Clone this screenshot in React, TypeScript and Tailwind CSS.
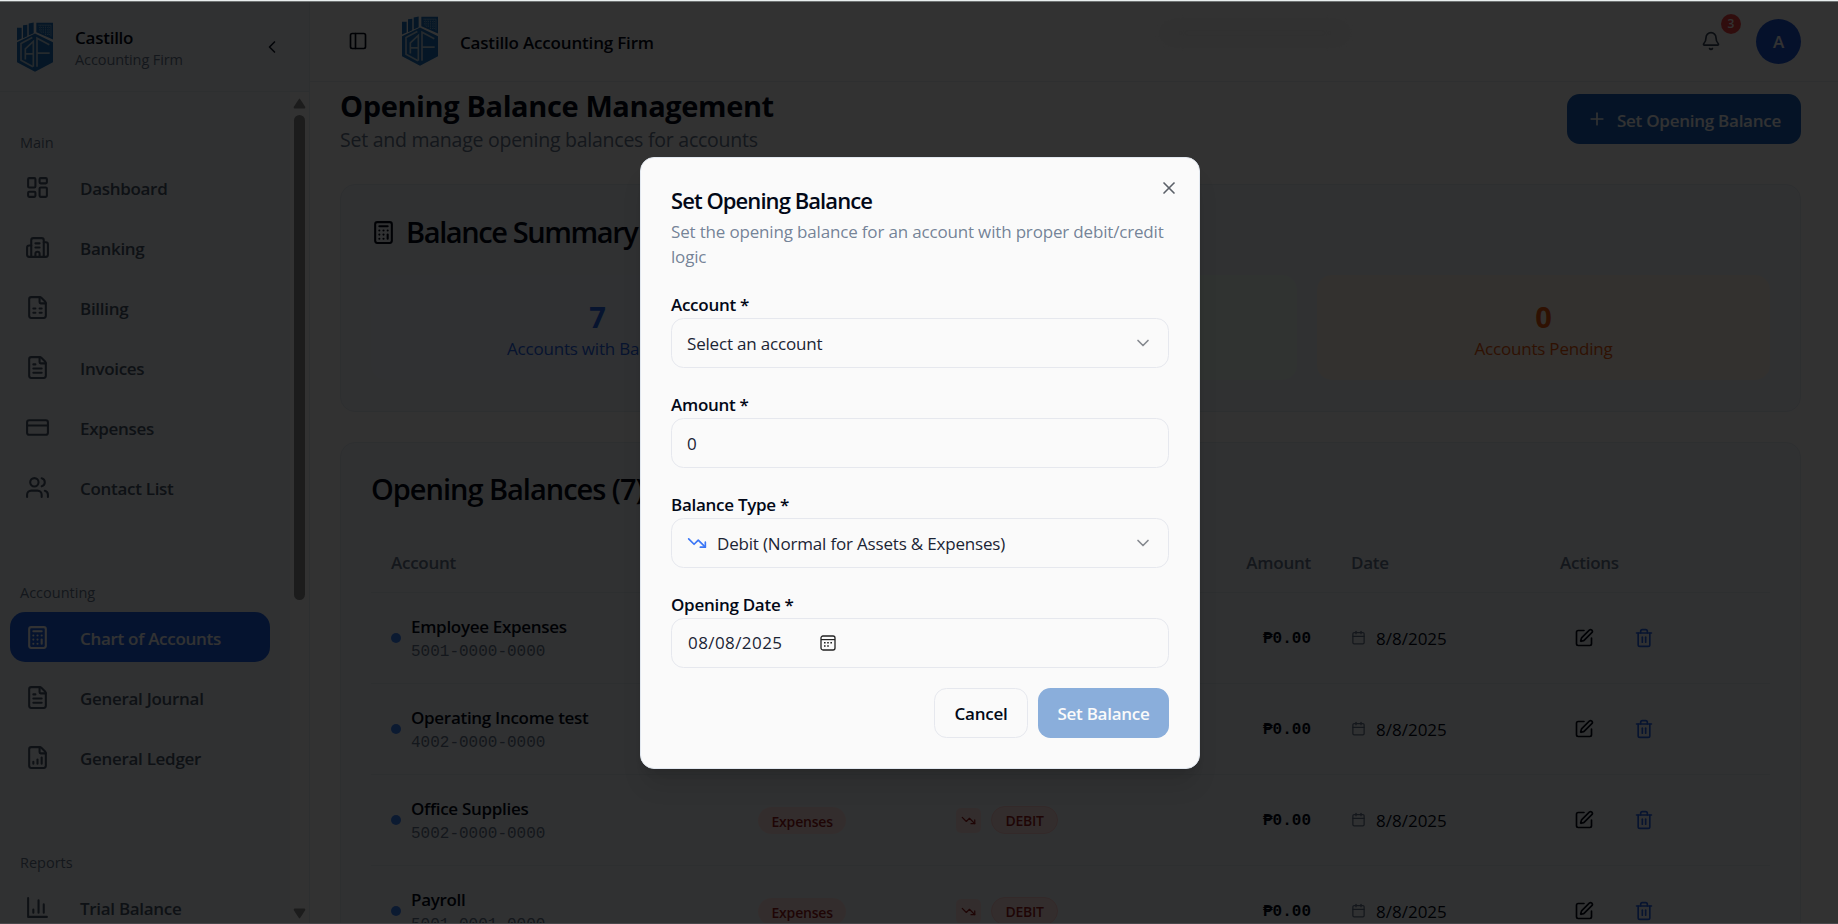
import type { ReactNode } from "react";
import {
  Bell,
  Building2,
  Calculator,
  Calendar,
  ChevronDown,
  ChevronLeft,
  CreditCard,
  FileChartColumnIncreasing,
  FileSpreadsheet,
  FileText,
  LayoutDashboard,
  PanelLeft,
  Plus,
  SquarePen,
  Trash2,
  TrendingDown,
  Users,
  X,
} from "lucide-react";

function Logo() {
  return (
    <svg width="36" height="50" viewBox="0 0 108 149" fill="none" className="shrink-0">
      <g fill="#1a70bd">
        <path d="M0 17h14v32L0 55z" />
        <path d="M18 9l13-1v34l-13 6z" />
        <path d="M35 4l15-3v32l-15 7z" />
        <path d="M58 2h50v50L58 30z" />
        <path d="M0 60L54 34l54 26v60l-54 29L0 120z" />
      </g>
      <g stroke="#9fc0dc" strokeWidth="2">
        <path d="M64 9h38v34" />
        <path d="M66 16h34M66 23h34M72 30h28M84 37h16M70 10v20M78 10v24M86 10v28M94 10v30" strokeDasharray="3 3" />
      </g>
      <g stroke="#b9cfe0" strokeWidth="5">
        <path d="M46 46L12 64v50l36 20" />
        <path d="M25 112V80L49 58v76M25 95h24" />
        <path d="M97 68L60 48v86M60 93h38" />
      </g>
    </svg>
  );
}

function ChartIcon() {
  return (
    <svg width="25" height="25" viewBox="0 0 24 24" fill="none" stroke="currentColor" strokeWidth="2" strokeLinecap="round" strokeLinejoin="round">
      <path d="M3 3v18h18M18 17V9M13 17V5M8 17v-3" />
    </svg>
  );
}

function DatePickerIcon() {
  return (
    <svg width="16" height="16" viewBox="0 0 16 16" fill="none" className="ml-[38px]">
      <rect x="1" y="1" width="14" height="14" rx="2" stroke="#222" strokeWidth="1.3" />
      <path d="M1 4.6h14" stroke="#222" strokeWidth="1.2" />
      <path d="M4 7.8h1.6M7.2 7.8h1.6M10.4 7.8h1.6M4 11h1.6M7.2 11h1.6" stroke="#222" strokeWidth="1.6" />
    </svg>
  );
}

type NavEntry = { label: string; icon: ReactNode; active?: boolean };
type NavGroup = { title: string; items: NavEntry[] };

const groups: NavGroup[] = [
  {
    title: "Main",
    items: [
      { label: "Dashboard", icon: <LayoutDashboard size={25} /> },
      { label: "Banking", icon: <Building2 size={25} /> },
      { label: "Billing", icon: <FileSpreadsheet size={25} /> },
      { label: "Invoices", icon: <FileText size={25} /> },
      { label: "Expenses", icon: <CreditCard size={25} /> },
      { label: "Contact List", icon: <Users size={25} /> },
    ],
  },
  {
    title: "Accounting",
    items: [
      { label: "Chart of Accounts", icon: <Calculator size={25} />, active: true },
      { label: "General Journal", icon: <FileText size={25} /> },
      { label: "General Ledger", icon: <FileChartColumnIncreasing size={25} /> },
    ],
  },
  { title: "Reports", items: [{ label: "Trial Balance", icon: <ChartIcon /> }] },
];

const rows = [
  { name: "Employee Expenses", code: "5001-0000-0000", type: "Expenses" },
  { name: "Operating Income test", code: "4002-0000-0000", type: "Revenue" },
  { name: "Office Supplies", code: "5002-0000-0000", type: "Expenses" },
  { name: "Payroll", code: "5001-0001-0000", type: "Expenses" },
];

function Sidebar() {
  return (
    <aside className="flex w-[310px] shrink-0 flex-col border-r border-[#e2e8f0] bg-[#f1f5f9]">
      <div className="flex h-[92px] shrink-0 items-center border-b border-[#e2e8f0] pt-[2px] pl-[17px]">
        <Logo />
        <div className="ml-[22px] flex w-[187px] flex-col pt-1">
          <span className="text-[17px] leading-[22px] font-semibold tracking-[-0.25px] text-[#020817]">Castillo</span>
          <span className="text-[14.5px] leading-[22px] tracking-[-0.1px] text-[#64748b]">Accounting Firm</span>
        </div>
        <ChevronLeft size={20} className="text-[#0f172a]" />
      </div>
      <div className="flex min-h-0 flex-1">
        <nav className="flex w-[290px] flex-col gap-[60px] overflow-hidden pt-[30px] pl-[10px]">
          {groups.map((g) => (
            <div key={g.title} className="flex w-[260px] shrink-0 flex-col">
              <div className="flex h-10 items-center pt-0.5 pl-[10px] text-[14.5px] font-medium text-[#64748b]">{g.title}</div>
              <div className="flex flex-col gap-[10px]">
                {g.items.map((it) => (
                  <div
                    key={it.label}
                    className={
                      it.active
                        ? "flex h-[50px] items-center rounded-[15px] bg-[#1d62e8] pl-[15px] text-[#f8fafc]"
                        : "flex h-[50px] items-center rounded-[15px] pl-[15px] text-[#475569]"
                    }
                  >
                    {it.icon}
                    <span className="pt-1 pl-[30px] text-[17px] leading-[22px] font-semibold tracking-[-0.3px]">{it.label}</span>
                  </div>
                ))}
              </div>
            </div>
          ))}
        </nav>
        <div className="flex flex-1 flex-col items-center bg-[#fafafa] py-[5px]">
          <svg width="13" height="11" viewBox="0 0 13 11" className="mt-px shrink-0 fill-[#8b8b8b]">
            <path d="M6.5 0.5Q7 0.5 12.3 9Q12.5 10.5 11.5 10.5H1.5Q0.5 10.5 0.7 9Q6 0.5 6.5 0.5z" />
          </svg>
          <div className="mt-[6px] h-[485px] w-[11px] rounded-full bg-[#8b8b8b]" />
          <svg width="13" height="11" viewBox="0 0 13 11" className="mt-auto shrink-0 rotate-180 fill-[#8b8b8b]">
            <path d="M6.5 0.5Q7 0.5 12.3 9Q12.5 10.5 11.5 10.5H1.5Q0.5 10.5 0.7 9Q6 0.5 6.5 0.5z" />
          </svg>
        </div>
      </div>
    </aside>
  );
}

function Header() {
  return (
    <header className="flex h-[82px] shrink-0 items-center border-b border-[#e4e8ee] pt-px pr-[37px] pl-[38px]">
      <PanelLeft size={20} className="text-[#020817]" />
      <div className="ml-[34px]">
        <Logo />
      </div>
      <span className="ml-[22px] pt-1 text-[17px] font-semibold tracking-[-0.18px] text-[#020817]">Castillo Accounting Firm</span>
      <div className="ml-[506px] mb-4 h-4 w-[190px] rounded-full bg-[#ebebeb] blur-[10px]" />
      <div className="relative ml-auto mr-[35px]">
        <Bell size={20} className="text-[#334155]" />
        <span className="absolute -top-[17px] left-[20px] flex size-5 items-center justify-center rounded-full bg-[#ef4444] text-[12px] font-semibold text-[#fafafa]">3</span>
      </div>
      <div className="flex size-[45px] items-center justify-center rounded-full bg-[#1d56d8] pt-0.5 text-[17px] font-semibold text-[#fafafa]">A</div>
    </header>
  );
}

function Stat({ value, label, tone }: { value: string; label: string; tone: string }) {
  return (
    <div className={`flex h-[105px] flex-col items-center rounded-[15px] pt-[20px] ${tone}`}>
      <span className="text-[29px] leading-[43px] font-bold">{value}</span>
      <span className="text-[17px] leading-[22px] tracking-[-0.2px]">{label}</span>
    </div>
  );
}

function Summary() {
  return (
    <section className="mt-10 h-[228px] rounded-[15px] border border-[#e2e8f0] bg-[#eff4fa] px-[30px] pt-[24px]">
      <h2 className="flex h-[46px] items-center text-[29px] font-semibold tracking-[-1.4px] text-[#020817]">
        <Calculator size={25} className="mr-[10px]" />
        Balance Summary
      </h2>
      <div className="mt-[20px] grid grid-cols-3 gap-[20px]">
        <Stat value="7" label="Accounts with Balances" tone="bg-[#eff4fc] text-[#2563eb]" />
        <Stat value="₱0.00" label="Total Balance" tone="bg-[#f0fdf4] text-[#16a34a]" />
        <Stat value="0" label="Accounts Pending" tone="bg-[#fdf4ea] text-[#ea580c]" />
      </div>
    </section>
  );
}

const columns = "grid grid-cols-[367px_198px_230px_165px_209px_1fr] border-b border-[#e2e8f0]";

function Balances() {
  return (
    <section className="mt-[30px] h-[600px] rounded-[15px] border border-[#e2e8f0] bg-[#f1f5f9] px-[30px] pt-[25px]">
      <h2 className="h-[42px] text-[29px] leading-[42px] font-semibold tracking-[-1.02px] text-[#020817]">Opening Balances (7)</h2>
      <div className={`${columns} mt-[23px] h-[60px] items-center text-[17px] font-semibold tracking-[-0.25px] text-[#64748b]`}>
        <span className="px-5">Account</span>
        <span className="px-5">Type</span>
        <span className="px-5">Balance Type</span>
        <span className="px-5 text-right">Amount</span>
        <span className="px-5">Date</span>
        <span className="px-5">Actions</span>
      </div>
      {rows.map((r) => (
        <div key={r.name} className={`${columns} h-[91px] items-center`}>
          <div className="flex items-center px-5">
            <span className="size-[10px] rounded-full bg-[#3b82f6]" />
            <div className="ml-[10px] flex flex-col">
              <span className="text-[17px] leading-[24px] font-semibold tracking-[-0.3px] text-[#020817]">{r.name}</span>
              <span className="pt-[3px] font-['Liberation_Mono',monospace] text-[16px] leading-[20px] text-[#64748b]">{r.code}</span>
            </div>
          </div>
          <div className="flex px-5">
            <span className="flex h-[27px] items-center rounded-full bg-[#fee2e2] px-[13.5px] pt-0.5 text-[14px] font-semibold tracking-[-0.2px] text-[#991b1b]">{r.type}</span>
          </div>
          <div className="flex items-center gap-[10px] px-5">
            <span className="flex size-[25px] items-center justify-center rounded-[5px] bg-[#fee2e2]">
              <TrendingDown size={15} className="text-[#991b1b]" />
            </span>
            <span className="flex h-[28px] items-center rounded-full border border-[#fecaca] bg-[#fee2e2] px-[13.5px] text-[14px] font-semibold tracking-[-0.3px] text-[#991b1b]">DEBIT</span>
          </div>
          <span className="px-5 pt-px text-right font-['Liberation_Mono',monospace] text-[16px] font-bold text-[#020817]">₱0.00</span>
          <div className="flex items-center px-5">
            <Calendar size={15} className="mb-px text-[#64748b]" />
            <span className="pt-0.5 pl-[10px] text-[17px] text-[#020817]">8/8/2025</span>
          </div>
          <div className="flex gap-[10px] pl-[19px]">
            <span className="flex w-[50px] justify-center text-[#020817]">
              <SquarePen size={20} />
            </span>
            <span className="flex w-[50px] justify-center text-[#2563eb]">
              <Trash2 size={20} />
            </span>
          </div>
        </div>
      ))}
    </section>
  );
}

function Field({ label, children }: { label: string; children: ReactNode }) {
  return (
    <div className="flex h-[75px] flex-col">
      <span className="h-[25px] text-[17px] leading-[24px] font-semibold tracking-[-0.28px] text-[#020817]">{label}</span>
      <div className="flex h-[50px] items-center rounded-[12.5px] border border-[#e6e8ee] px-[15px] text-[17px] tracking-[-0.18px] text-[#1b2434]">{children}</div>
    </div>
  );
}

function Dialog() {
  return (
    <div className="relative flex h-[612px] w-[560px] flex-col rounded-[14px] border border-[#e2e8f0] bg-[#fafafa] px-[30px] pt-[28px] shadow-xl">
      <X size={20} className="absolute top-[20px] right-[20px] text-[#5b6068]" />
      <h3 className="h-[29px] text-[22px] leading-[29px] font-semibold tracking-[-0.93px] text-[#020817]">Set Opening Balance</h3>
      <p className="mt-[4px] text-[17px] leading-[25px] tracking-[-0.17px] text-[#64748b]/90">
        Set the opening balance for an account with proper debit/credit logic
      </p>
      <div className="mt-[24px] flex flex-col gap-[25px]">
        <Field label="Account *">
          <span className="pt-0.5">Select an account</span>
          <ChevronDown size={20} className="ml-auto text-[#85898f]" />
        </Field>
        <Field label="Amount *">
          <span className="pt-0.5">0</span>
        </Field>
        <Field label="Balance Type *">
          <TrendingDown size={20} className="text-[#3b76f6]" />
          <span className="pt-0.5 pl-[10px]">Debit (Normal for Assets &amp; Expenses)</span>
          <ChevronDown size={20} className="ml-auto text-[#85898f]" />
        </Field>
        <Field label="Opening Date *">
          <span className="pl-px tracking-[0.42px]">08/08/2025</span>
          <DatePickerIcon />
        </Field>
      </div>
      <div className="mt-[20px] flex justify-end gap-[10px]">
        <button className="h-[50px] w-[94px] rounded-[12.5px] border border-[#e6e8ee] pt-0.5 text-[17px] font-semibold tracking-[-0.25px] text-[#020817]">Cancel</button>
        <button className="h-[50px] w-[131px] rounded-[12.5px] bg-[#8aaedb] pt-0.5 text-[17px] font-semibold tracking-[-0.25px] text-[#fafafa]">Set Balance</button>
      </div>
    </div>
  );
}

export default function App() {
  return (
    <div className="relative h-[924px] w-full overflow-hidden bg-[#fafafa] font-['Open_Sans',sans-serif]">
      <div className="flex h-full">
        <Sidebar />
        <div className="flex min-w-0 flex-1 flex-col">
          <Header />
          <main className="min-h-0 flex-1 overflow-hidden pr-[37px] pl-[30px]">
            <div className="flex justify-between pt-[5px]">
              <div className="flex h-[57px] flex-col">
                <h1 className="text-[29px] leading-[38px] font-bold tracking-[-0.38px] text-[#020817]">Opening Balance Management</h1>
                <p className="pt-px text-[19.5px] leading-[28px] tracking-[-0.25px] text-[#64748b]">Set and manage opening balances for accounts</p>
              </div>
              <button className="mt-[7px] flex h-[50px] w-[234px] items-center rounded-[12.5px] bg-[#1a62bc] pl-[20px] text-[17px] font-semibold tracking-[-0.26px] text-[#f8fafc]">
                <Plus size={20} />
                <span className="pt-[3px] pl-[10px]">Set Opening Balance</span>
              </button>
            </div>
            <Summary />
            <Balances />
          </main>
        </div>
      </div>
      <div className="absolute inset-0 flex items-start justify-center bg-black/80 pt-[157px] pl-[2px]">
        <Dialog />
      </div>
      <div className="absolute inset-x-0 top-0 h-[2px] border-b border-[#6f7373] bg-[#e9eeee]" />
      <div className="absolute inset-x-0 bottom-0 h-px bg-[#48474a]" />
    </div>
  );
}
